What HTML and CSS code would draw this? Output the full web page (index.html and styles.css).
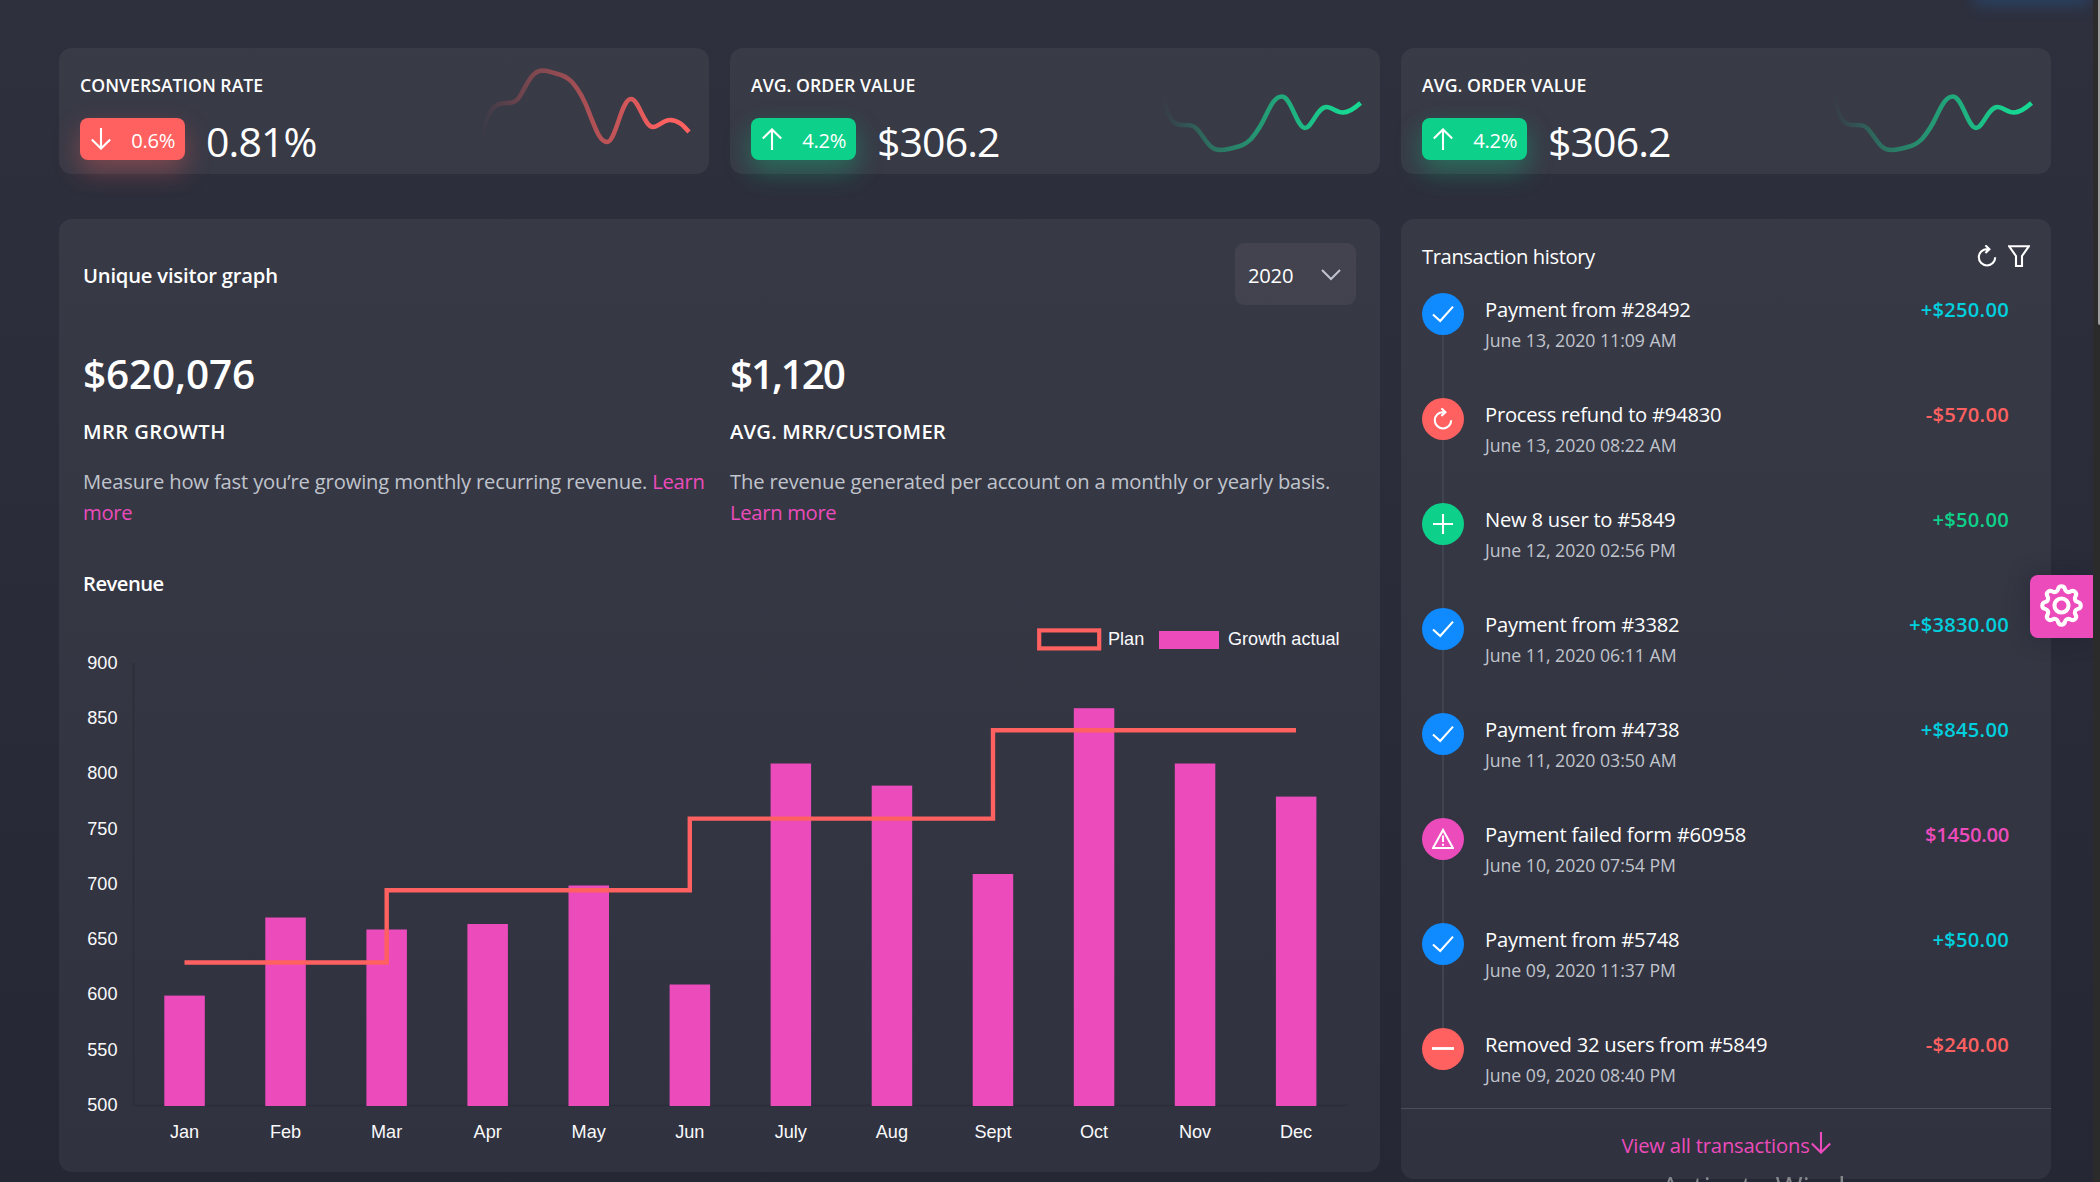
FILE: index.html
```html
<!DOCTYPE html>
<html lang="en">
<head>
<meta charset="utf-8">
<title>Analytics dashboard</title>
<link rel="stylesheet" href="styles.css">
</head>
<body>
<svg class="sprite" aria-hidden="true">
  <defs>
    <linearGradient id="fade-red" x1="0" x2="1"><stop offset="0" stop-color="#ff6060" stop-opacity="0"/><stop offset=".25" stop-color="#ff6060" stop-opacity=".35"/><stop offset=".65" stop-color="#ff6060" stop-opacity=".7"/><stop offset=".88" stop-color="#ff6060"/></linearGradient>
    <linearGradient id="fade-green" x1="0" x2="1"><stop offset="0" stop-color="#17d893" stop-opacity="0"/><stop offset=".25" stop-color="#17d893" stop-opacity=".35"/><stop offset=".65" stop-color="#17d893" stop-opacity=".75"/><stop offset=".92" stop-color="#17d893"/></linearGradient>
  </defs>
  <symbol id="down" viewBox="0 0 20 22"><path d="M10 0V21M.8 11.6L10 20.6L19.2 11.6"/></symbol>
  <symbol id="up" viewBox="0 0 20 22"><path d="M10 22V1M.8 10.4L10 1.4L19.2 10.4"/></symbol>
  <symbol id="check" viewBox="0 0 22 22"><path d="M1 11.5L8.2 18L21 3.6"/></symbol>
  <symbol id="plus" viewBox="0 0 22 22"><path d="M11 1V21M1 11H21"/></symbol>
  <symbol id="minus" viewBox="0 0 22 22"><path d="M0 10.5H22"/></symbol>
  <symbol id="reload" viewBox="0 0 22 22"><path d="M12.6 4.1H11A8.2 8.2 0 1 0 19.2 12.3M9.4 .3L13.4 4.2L9.4 8.1"/></symbol>
  <symbol id="warning" viewBox="0 0 22 22"><path d="M11 2L21 20H1ZM11 7.5V14M11 15.8V17.8"/></symbol>
  <symbol id="filter" viewBox="0 0 22 22"><path d="M1 1.2H21L14 11V21H8V11Z"/></symbol>
</svg>
<main class="page">
  <section class="stats">
    <article class="card stat">
      <div class="stat-info"><h6 class="stat-title">CONVERSATION RATE</h6>
        <div class="stat-row"><span class="badge badge-red"><svg class="icon arrow"><use href="#down"/></svg><span>0.6%</span></span><span class="stat-value">0.81%</span></div></div>
      <svg class="spark" viewBox="0 0 210 90"><path stroke="url(#fade-red)" d="M-2 67C2 50 8 34 17 33C24 31 32 34 37 25C44 13 49 0 59 -.5C65 -.5 68 1 73 2.500C80 4 84 6 89 11C97 20 102 30 107 44C113 59 117 71 124 71C133 71 138 28 148 28C156 28 161 56 170 56C176 56 180 49 187 49C195 49 200 54 206 61"/></svg>
    </article>
    <article class="card stat">
      <div class="stat-info"><h6 class="stat-title">AVG. ORDER VALUE</h6>
        <div class="stat-row"><span class="badge badge-green"><svg class="icon arrow"><use href="#up"/></svg><span>4.2%</span></span><span class="stat-value">$306.2</span></div></div>
      <svg class="spark" viewBox="0 0 210 90"><path stroke="url(#fade-green)" d="M8 22C12 42 17 54 27 54C34 54 38 53 43 58C51 67 55 79 66 79C71 79 74 78 79 77C86 75 91 74 97 68C103 61 108 53 112 44C117 34 121 25.500 128 25.500C137 25.500 143 57 151 57C158 57 163 36 172.500 36C178 36 182 41.500 189 41.500C195 41.500 201 37 206.500 32"/></svg>
    </article>
    <article class="card stat">
      <div class="stat-info"><h6 class="stat-title">AVG. ORDER VALUE</h6>
        <div class="stat-row"><span class="badge badge-green"><svg class="icon arrow"><use href="#up"/></svg><span>4.2%</span></span><span class="stat-value">$306.2</span></div></div>
      <svg class="spark" viewBox="0 0 210 90"><path stroke="url(#fade-green)" d="M8 22C12 42 17 54 27 54C34 54 38 53 43 58C51 67 55 79 66 79C71 79 74 78 79 77C86 75 91 74 97 68C103 61 108 53 112 44C117 34 121 25.500 128 25.500C137 25.500 143 57 151 57C158 57 163 36 172.500 36C178 36 182 41.500 189 41.500C195 41.500 201 37 206.500 32"/></svg>
    </article>
  </section>

  <section class="panels">
    <article class="card visitors">
      <header class="visitors-head">
        <h5 class="heading">Unique visitor graph</h5>
        <div class="select"><span>2020</span><svg class="chevron" viewBox="0 0 20 12"><path d="M1 1L10 10L19 1"/></svg></div>
      </header>
      <div class="metrics">
        <div class="metric"><div class="metric-value">$620,076</div><h6 class="metric-name wide">MRR GROWTH</h6>
          <p class="metric-text">Measure how fast you’re growing monthly recurring revenue. <a>Learn more</a></p></div>
        <div class="metric"><div class="metric-value tight">$1,120</div><h6 class="metric-name">AVG. MRR/CUSTOMER</h6>
          <p class="metric-text">The revenue generated per account on a monthly or yearly basis. <a>Learn more</a></p></div>
      </div>
      <h5 class="heading revenue">Revenue</h5>
      <svg class="chart" viewBox="0 0 1280 560" width="1280" height="560">
        <g class="legend">
          <rect class="plan-key" x="957.2" y="20.4" width="60" height="18"/><text x="1026" y="35">Plan</text>
          <rect class="bar" x="1077" y="21" width="60" height="18"/><text x="1146" y="35">Growth actual</text>
        </g>
        <path class="axis" d="M51.5 53V495.5H1266"/>
        <g class="ylabels">
          <text x="35.500" y="59">900</text><text x="35.500" y="114">850</text><text x="35.500" y="169">800</text><text x="35.500" y="225">750</text><text x="35.500" y="280">700</text><text x="35.500" y="335">650</text><text x="35.500" y="390">600</text><text x="35.500" y="446">550</text><text x="35.500" y="501">500</text>
        </g>
        <g class="bar">
          <rect x="82.3" y="385.6" width="40.5" height="110.4"/><rect x="183.3" y="307.5" width="40.5" height="188.5"/><rect x="284.4" y="319.5" width="40.5" height="176.5"/><rect x="385.4" y="314" width="40.5" height="182"/><rect x="486.5" y="275.5" width="40.5" height="220.5"/><rect x="587.6" y="374.5" width="40.5" height="121.5"/><rect x="688.6" y="153.5" width="40.5" height="342.5"/><rect x="789.7" y="175.6" width="40.5" height="320.4"/><rect x="890.7" y="264" width="40.5" height="232"/><rect x="991.8" y="98.2" width="40.5" height="397.8"/><rect x="1092.8" y="153.5" width="40.5" height="342.5"/><rect x="1193.9" y="186.6" width="40.5" height="309.4"/>
        </g>
        <path class="plan" d="M102.5 352.5H304.7V280.3H607.8V208.6H911V120.3H1214"/>
        <g class="xlabels">
          <text x="102.5" y="528">Jan</text><text x="203.6" y="528">Feb</text><text x="304.6" y="528">Mar</text><text x="405.7" y="528">Apr</text><text x="506.7" y="528">May</text><text x="607.8" y="528">Jun</text><text x="708.8" y="528">July</text><text x="809.9" y="528">Aug</text><text x="911" y="528">Sept</text><text x="1012" y="528">Oct</text><text x="1113" y="528">Nov</text><text x="1214" y="528">Dec</text>
        </g>
      </svg>
    </article>

    <article class="card history">
      <header class="history-head"><h5>Transaction history</h5><span class="tools"><svg class="icon"><use href="#reload"/></svg><svg class="icon"><use href="#filter"/></svg></span></header>
      <ul class="timeline">
        <li><span class="dot blue"><svg class="icon"><use href="#check"/></svg></span><div class="entry"><b>Payment from #28492</b><small>June 13, 2020 11:09 AM</small></div><strong class="cyan">+$250.00</strong></li>
        <li><span class="dot red"><svg class="icon"><use href="#reload"/></svg></span><div class="entry"><b>Process refund to #94830</b><small>June 13, 2020 08:22 AM</small></div><strong class="c-red">-$570.00</strong></li>
        <li><span class="dot green"><svg class="icon"><use href="#plus"/></svg></span><div class="entry"><b>New 8 user to #5849</b><small>June 12, 2020 02:56 PM</small></div><strong class="c-green">+$50.00</strong></li>
        <li><span class="dot blue"><svg class="icon"><use href="#check"/></svg></span><div class="entry"><b>Payment from #3382</b><small>June 11, 2020 06:11 AM</small></div><strong class="cyan">+$3830.00</strong></li>
        <li><span class="dot blue"><svg class="icon"><use href="#check"/></svg></span><div class="entry"><b>Payment from #4738</b><small>June 11, 2020 03:50 AM</small></div><strong class="cyan">+$845.00</strong></li>
        <li><span class="dot pink"><svg class="icon"><use href="#warning"/></svg></span><div class="entry"><b>Payment failed form #60958</b><small>June 10, 2020 07:54 PM</small></div><strong class="c-pink">$1450.00</strong></li>
        <li><span class="dot blue"><svg class="icon"><use href="#check"/></svg></span><div class="entry"><b>Payment from #5748</b><small>June 09, 2020 11:37 PM</small></div><strong class="cyan">+$50.00</strong></li>
        <li><span class="dot red"><svg class="icon thick"><use href="#minus"/></svg></span><div class="entry"><b>Removed 32 users from #5849</b><small>June 09, 2020 08:40 PM</small></div><strong class="c-red">-$240.00</strong></li>
      </ul>
      <footer class="view-all"><a>View all transactions</a><svg class="icon arrow"><use href="#down"/></svg></footer>
    </article>
  </section>
</main>
<div class="top-glow"></div>
<div class="settings"><svg viewBox="0 0 16 16"><path d="M8 4.754a3.246 3.246 0 1 0 0 6.492 3.246 3.246 0 0 0 0-6.492zM5.754 8a2.246 2.246 0 1 1 4.492 0 2.246 2.246 0 0 1-4.492 0z"/><path d="M9.796 1.343c-.527-1.79-3.065-1.79-3.592 0l-.094.319a.873.873 0 0 1-1.255.52l-.292-.16c-1.64-.892-3.433.902-2.54 2.541l.159.292a.873.873 0 0 1-.52 1.255l-.319.094c-1.79.527-1.79 3.065 0 3.592l.319.094a.873.873 0 0 1 .52 1.255l-.16.292c-.892 1.64.901 3.434 2.541 2.54l.292-.159a.873.873 0 0 1 1.255.52l.094.319c.527 1.79 3.065 1.79 3.592 0l.094-.319a.873.873 0 0 1 1.255-.52l.292.16c1.64.893 3.434-.902 2.54-2.541l-.159-.292a.873.873 0 0 1 .52-1.255l.319-.094c1.79-.527 1.79-3.065 0-3.592l-.319-.094a.873.873 0 0 1-.52-1.255l.16-.292c.893-1.64-.902-3.433-2.541-2.54l-.292.159a.873.873 0 0 1-1.255-.52l-.094-.319zm-2.633.283c.246-.835 1.428-.835 1.674 0l.094.319a1.873 1.873 0 0 0 2.693 1.115l.291-.16c.764-.415 1.6.42 1.184 1.185l-.159.292a1.873 1.873 0 0 0 1.116 2.692l.318.094c.835.246.835 1.428 0 1.674l-.319.094a1.873 1.873 0 0 0-1.115 2.693l.16.291c.415.764-.42 1.6-1.185 1.184l-.291-.159a1.873 1.873 0 0 0-2.693 1.116l-.094.318c-.246.835-1.428.835-1.674 0l-.094-.319a1.873 1.873 0 0 0-2.692-1.115l-.292.16c-.764.415-1.6-.42-1.184-1.185l.159-.291A1.873 1.873 0 0 0 1.945 8.93l-.319-.094c-.835-.246-.835-1.428 0-1.674l.319-.094A1.873 1.873 0 0 0 3.06 4.377l-.16-.292c-.415-.764.42-1.6 1.185-1.184l.292.159a1.873 1.873 0 0 0 2.692-1.115l.094-.319z"/></svg></div>
<div class="scrollbar"><span class="thumb"></span></div>
<div class="watermark">Activate Windows</div>
</body>
</html>
```
FILE: styles.css
```css
* { box-sizing: border-box; }
html, body { height: 100%; }
body {
  margin: 0;
  overflow: hidden;
  color: #fff;
  background: linear-gradient(#2e303d, #252735);
  font: 20.2px/31px "Open Sans", sans-serif;
  letter-spacing: -.24px;
}
h5, h6, p, ul { margin: 0; padding: 0; }
.sprite { position: absolute; width: 0; height: 0; }
.icon { width: 22px; height: 22px; fill: none; stroke: currentColor; stroke-width: 2.1; display: block; flex: none; }
.thick { stroke-width: 2.8; }
.arrow { width: 20px; }
.page { padding: 48px 49px 0 59px; display: flex; flex-direction: column; gap: 45px; }
.card { background: rgba(255, 255, 255, .055); border-radius: 13px; }

.stats { display: grid; grid-template-columns: repeat(3, 650px); gap: 21px; }
.stat { height: 126px; display: flex; justify-content: space-between; padding: 23px 16px 0 21px; }
.stat-title { font-size: 17.7px; line-height: 28px; font-weight: 600; letter-spacing: 0; white-space: nowrap; }
.stat-row { display: flex; align-items: center; gap: 21px; margin-top: 19px; height: 42px; }
.badge { width: 105px; height: 42px; border-radius: 8px; display: flex; align-items: center; justify-content: space-between; padding: 2px 10px 0 11px; letter-spacing: -.35px; }
.badge .icon { margin-top: -2px; }
.badge-red { background: #ff6060; box-shadow: 0 11px 26px rgba(255, 96, 96, .35); }
.badge-green { background: #0dd18a; box-shadow: 0 11px 26px rgba(13, 209, 138, .35); }
.stat-value { font-size: 41px; line-height: 42px; letter-spacing: -.9px; padding-top: 3px; }
.spark { width: 210px; height: 90px; overflow: visible; fill: none; stroke-width: 4.5; }

.panels { display: grid; grid-template-columns: 1321px 650px; gap: 21px; align-items: start; }
.visitors { height: 953px; padding: 24px 24px 0; }
.visitors-head { display: flex; justify-content: space-between; align-items: center; height: 62px; }
.heading { font-size: 20.2px; font-weight: 600; letter-spacing: -.2px; padding-top: 2px; }
.select { width: 121px; height: 62px; border-radius: 9px; background: rgba(255, 235, 245, .06); display: flex; align-items: center; justify-content: space-between; padding: 3px 15px 0 13px; }
.chevron { width: 20px; height: 12px; fill: none; stroke: #c0c4cc; stroke-width: 2; margin-top: -2px; }
.metrics { display: grid; grid-template-columns: 626px 626px; gap: 21px; margin-top: 43px; }
.metric-value { font-size: 40.5px; line-height: 52px; font-weight: 600; letter-spacing: -.15px; }
.tight { letter-spacing: -2.2px; }
.metric-name { font-size: 20.2px; line-height: 32px; font-weight: 600; margin-top: 15px; letter-spacing: .2px; }
.wide { letter-spacing: .4px; }
.metric-text { margin-top: 19px; color: #c0c4cc; letter-spacing: -.17px; }
a { color: #ec4bbb; }
.metric-text a { letter-spacing: -.3px; }
.revenue { margin-top: 39px; padding-top: 1px; letter-spacing: -.5px; }
.chart { display: block; margin: 11px 0 0 -1px; font: 18.1px "Liberation Sans", sans-serif; letter-spacing: 0; fill: #fafafc; }
.bar { fill: #ec4bbb; }
.plan-key { fill: #2b2d3a; stroke: #ff6060; stroke-width: 4.2; }
.axis { fill: none; stroke: #2b2d39; stroke-width: 1.3; }
.ylabels text { text-anchor: end; }
.xlabels text { text-anchor: middle; }
.plan { fill: none; stroke: #ff6060; stroke-width: 4.4; }

.history { height: 960px; display: flex; flex-direction: column; }
.history-head { display: flex; justify-content: space-between; align-items: center; padding: 22px 21px 0 21px; height: 53px; }
.history-head h5 { font-size: 20.2px; font-weight: 400; letter-spacing: -.4px; }
.tools { display: flex; gap: 10px; margin-top: -2px; }
.timeline { list-style: none; padding: 21px 42px 0 21px; height: 837px; border-bottom: 1px solid #4b4e59; flex: none; }
.timeline li { display: flex; height: 105px; align-items: flex-start; }
.timeline li:not(:last-child) .dot::after { content: ""; position: absolute; left: 20px; top: 42px; width: 2px; height: 63px; background: #41434f; }
.dot { position: relative; flex: none; width: 42px; height: 42px; border-radius: 50%; display: grid; place-items: center; }
.entry { flex: 1; margin-left: 21px; display: flex; flex-direction: column; }
.entry b { font-weight: 400; line-height: 31px; margin-top: 1px; }
.entry small { font-size: 17.7px; line-height: 31px; color: #c0c4cc; letter-spacing: -.03px; }
.timeline strong { font-weight: 600; line-height: 31px; margin-top: 1px; letter-spacing: .25px; }
.blue { background: #0f8bff; }
.red { background: #ff6060; }
.green { background: #0dd18a; }
.pink { background: #ec4bbb; }
.cyan { color: #00cfdd; }
.c-red { color: #ff6060; }
.c-green { color: #0dd18a; }
.timeline .c-pink { color: #ec4bbb; letter-spacing: -.3px; }
.view-all { display: flex; justify-content: center; align-items: center; height: 69px; padding-top: 3px; gap: 1px; color: #ec4bbb; letter-spacing: -.18px; }
.view-all .icon { margin-top: -4px; }

.settings { position: fixed; top: 575px; right: 7px; width: 63px; height: 63px; border-radius: 8px 0 0 8px; background: #ec4bbb; display: grid; place-items: center; box-shadow: 0 0 22px rgba(20, 22, 34, .35); padding-bottom: 2px; }
.settings svg { width: 41px; height: 41px; fill: #fff; stroke: #fff; stroke-width: .6; overflow: visible; }
.scrollbar { position: fixed; top: 0; right: 0; width: 7px; height: 100%; background: #2b2b2c; }
.thumb { display: block; margin-left: auto; width: 2px; height: 325px; background: #9f9f9f; border-radius: 0 0 0 2px; }
.top-glow { position: fixed; top: -12px; right: 16px; width: 104px; height: 10px; box-shadow: 0 2px 16px 5px rgba(30, 110, 190, .32); }
.watermark { position: fixed; left: 1661px; top: 1168px; font-size: 29.5px; line-height: 38px; color: #85868a; white-space: nowrap; }
```
